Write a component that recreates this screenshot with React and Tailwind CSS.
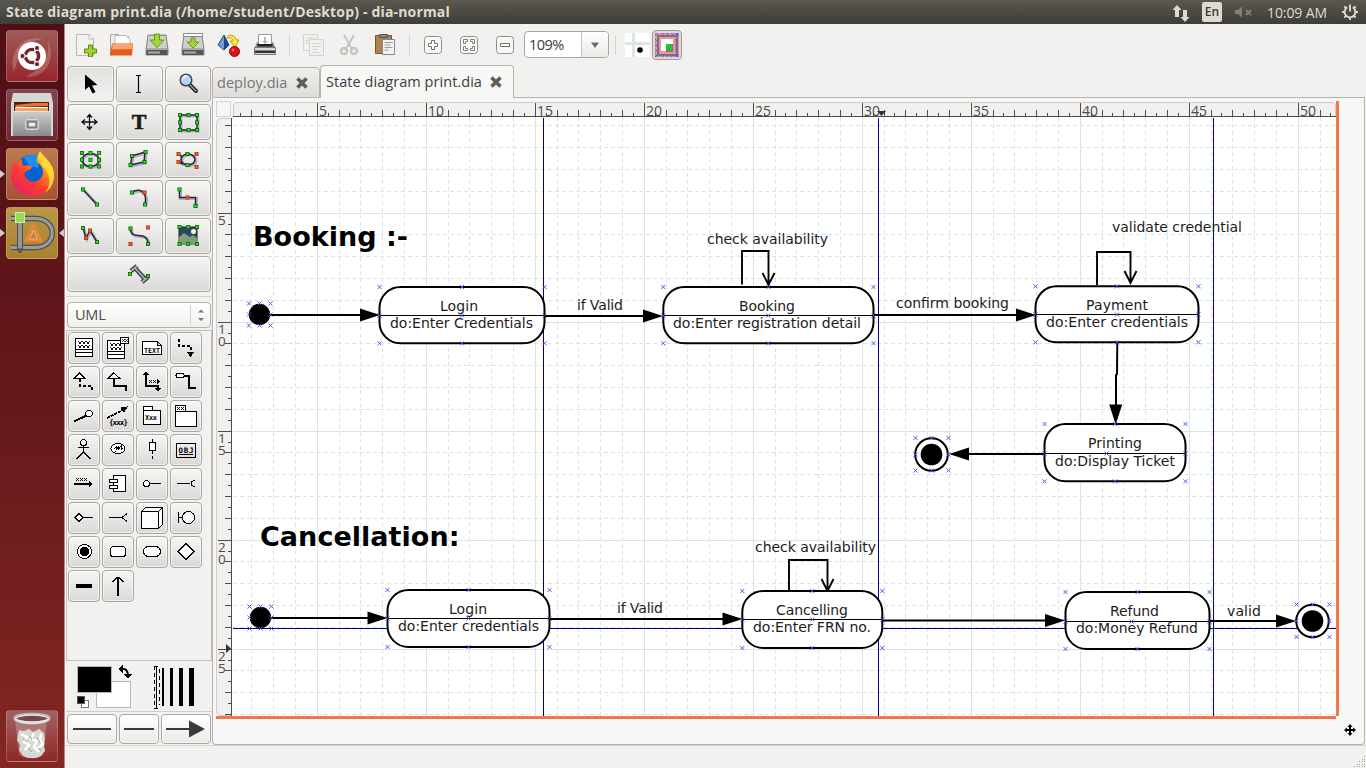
import React from "react";

const range = (n, from = 0) => Array.from({ length: n }, (_, i) => i + from);

/* ---------- top bar ---------- */

function TopBar() {
  return (
    <header className="flex h-6 shrink-0 items-center bg-linear-to-b from-[#5b584f] to-[#3e3d38] font-['Open_Sans',sans-serif] text-[#dfdbd2]">
      <h1 className="pl-[6px] text-[14px] leading-6 font-bold tracking-[0.17px] whitespace-nowrap">
        State diagram print.dia (/home/student/Desktop) - dia-normal
      </h1>
      <div className="ml-auto flex h-6 items-center pr-[7px]">
        <svg className="h-5 w-5" viewBox="0 0 20 20" fill="#dfdbd2">
          <path d="M6 3l4.500 5H8v7H4V8H1.500zM14 20l-4.500-5H12V8h4v7h2.500z" />
        </svg>
        <span className="ml-[11px] flex h-5 w-5 items-center justify-center rounded-xs bg-[#dfdbd2] text-[12px] font-semibold text-[#3c3b37]">En</span>
        <svg className="ml-[12px] h-5 w-5" viewBox="0 0 20 20">
          <path d="M1 8h3l4-3.500v11L4 12H1z" fill="#85827a" />
          <path d="M12 8l5 5m0-5l-5 5" stroke="#85827a" strokeWidth="1.800" />
        </svg>
        <span className="ml-[13px] w-[63px] text-[14px] tracking-[-0.1px] whitespace-nowrap">10:09 AM</span>
        <svg className="ml-[11px] h-[18px] w-[18px]" viewBox="0 0 18 18" fill="none" stroke="#dfdbd2" strokeWidth="1.900">
          <path d="M6.300 4.300a5.400 5.400 0 1 0 5.400 0M9 1.500v7M9 14v3M1 9h3M14 9h3M3.300 14.700l2-2M14.700 14.700l-2-2M3.300 3.300l1.700 1.700M14.700 3.300L13 5" />
        </svg>
      </div>
    </header>
  );
}

/* ---------- launcher ---------- */

function Tile({ className, children, left, right }) {
  return (
    <div className="flex h-[52px] w-[65px] items-center">
      <svg className="h-3 w-[6px] shrink-0" viewBox="0 0 6 12">{left && <path d="M0 2l5 4-5 4z" fill="#d9c8c8" />}</svg>
      <div className={"h-[52px] w-[52px] shrink-0 overflow-hidden rounded-[4px] border border-white/20 " + className}>
        <svg className="-m-px h-[52px] w-[52px]" viewBox="0 0 52 52">{children}</svg>
      </div>
      <svg className="h-3 w-[6px] shrink-0" viewBox="0 0 6 12">{right && <path d="M6 2L1 6l5 4z" fill="#d9c8c8" />}</svg>
    </div>
  );
}

function Launcher() {
  return (
    <nav className="flex w-[65px] shrink-0 flex-col gap-[7px] border-r border-[#b98484] bg-linear-to-b from-[#4f1015] via-[#65181b] to-[#832722] pt-[6px] pb-[6px]">
      <Tile className="bg-linear-to-b from-[#a05a58] to-[#96242a]">
        <path d="M8 42C2 22 17 4 37 9C17 11 13 25 8 42M20 47C41 48 50 28 42 10C45 32 32 39 20 47" fill="#fff" opacity="0.200" />
        <circle cx="26" cy="26" r="14" fill="#fff" />
        <circle cx="26" cy="26" r="6.600" fill="none" stroke="#74252b" strokeWidth="3.400" strokeDasharray="11.800 2" strokeDashoffset="-7.800" />
        <circle cx="16.500" cy="26" r="2.600" fill="#74252b" stroke="#fff" />
        <circle cx="31" cy="18" r="2.600" fill="#74252b" stroke="#fff" />
        <circle cx="31" cy="34.200" r="2.600" fill="#74252b" stroke="#fff" />
      </Tile>
      <Tile className="bg-linear-to-b from-[#83454e] to-[#6d2833]">
        <defs>
          <linearGradient id="cab" x1="0" y1="0" x2="0" y2="1"><stop offset="0" stopColor="#cfcfcf" /><stop offset="1" stopColor="#8a8a8a" /></linearGradient>
        </defs>
        <path d="M7 4h38l2 10v33H5V14z" fill="#d6d6d6" />
        <path d="M8 13h35v10H8z" fill="#4a1f16" />
        <path d="M9 16l19-2h14v3l-32 1z" fill="#e9742f" />
        <path d="M9 18h33v5H9z" fill="#f0a566" />
        <path d="M10 18.500h32" stroke="#fff" />
        <path d="M7 22h38v25H7z" fill="url(#cab)" />
        <path d="M7 22.500h38" stroke="#e6e6e6" />
        <rect x="19.500" y="30.500" width="13" height="10" rx="2" fill="#aaa" stroke="#ddd" />
        <rect x="22" y="33" width="8" height="5" fill="#eee" stroke="#555" />
      </Tile>
      <Tile left className="bg-linear-to-b from-[#bc7a51] to-[#a95236]">
        <defs>
          <linearGradient id="fox" x1="0.100" y1="1" x2="0.900" y2="0"><stop offset="0" stopColor="#e01f6a" /><stop offset="0.400" stopColor="#ff3b2d" /><stop offset="0.700" stopColor="#ff9520" /><stop offset="1" stopColor="#ffe62a" /></linearGradient>
        </defs>
        <circle cx="26" cy="25" r="18" fill="#0a62d0" />
        <path d="M18 10c6-5 13-4 17 0l-3 10-8-2z" fill="#1d8ff0" />
        <path d="M34 3c3 6 14 12 14 24c0 12-9 21-21.500 21C14 48 5 38 5 27c0-7 2-12 5-15v4c1-2 3-4 6-5c-1 3 0 5 2 7c3-1 5-1 7 0c2 2 0 3-4 5c-3 1-3 4-1 7c5 7 17 4 17-6c0-4-2-7-5-9C29 14 31 8 34 3z" fill="url(#fox)" />
        <path d="M34 3c3 6 14 12 14 24c0 9-4 14-9 18c7-9 5-17 0-24c-7-7-8-12-5-18z" fill="#ffe033" opacity="0.850" />
      </Tile>
      <Tile left right className="bg-linear-to-b from-[#bb9747] to-[#a8812f]">
        <g fill="none" strokeLinejoin="round">
          <path d="M5 11.500h24c23 0 23 29 0 29H5" stroke="#4c5152" strokeWidth="5.500" />
          <path d="M5 11.500h24c23 0 23 29 0 29H5" stroke="#999e9d" strokeWidth="3" />
          <path d="M14 12v30" stroke="#4c5152" strokeWidth="6" />
          <path d="M14 12v30" stroke="#92989a" strokeWidth="4" />
          <path d="M11 42l3 4 3-4z" fill="#666" stroke="#444" />
          <path d="M27.500 18l7.500 15.500H20z" stroke="#f38336" strokeWidth="2.500" />
          <path d="M27.500 23l4 9h-8z" stroke="#f9b076" strokeWidth="1" />
        </g>
        <rect x="9.500" y="5.500" width="9" height="10" fill="#97de58" stroke="#cdf2a6" />
      </Tile>
      <div className="mt-auto">
        <Tile className="bg-linear-to-b from-[#a26260] to-[#8d2529]">
          <path d="M9 10h32l-4 34c-3 5-21 5-24 0z" fill="#ddd" opacity="0.280" />
          <path d="M13 20l5 1 5-2 4 3 6-3 5 4 1 6-1 6 1 6-4 5c-5 3-12 3-18 0l-4-6 1-5-3-5 1-6z" fill="#d7d8d3" />
          <path d="M15 24l6 3-3 5 5 3-4 5M28 23l-3 6 6 2-3 6 5 5M35 24l-1 6 3 4-5 4" stroke="#fff" strokeWidth="2.500" fill="none" />
          <path d="M17 29l4 2M24 26l2 4M31 28l3 4M22 38l4 4M33 38l2 3" stroke="#9c9f99" fill="none" />
          <ellipse cx="26" cy="8.500" rx="17" ry="4.200" fill="#75484a" stroke="#e4e4e2" strokeWidth="3" />
          <ellipse cx="26" cy="9" rx="18" ry="5.500" fill="none" stroke="#999" strokeWidth="0.800" />
        </Tile>
      </div>
    </nav>
  );
}

/* ---------- toolbar ---------- */

const toolbarIcons = {
  New: (
    <g>
      <path d="M3.500 1.500h13l4 4v17h-17z" fill="#f2f2f0" stroke="#b9b9b4" />
      <path d="M16 1.500v4.500h4.500" fill="#fff" stroke="#b9b9b4" />
      <path d="M16.500 13.500h4v4h4v4h-4v4h-4v-4h-4v-4h4z" fill="#a2d335" stroke="#5d8d0c" transform="translate(-1 -1.500)" />
    </g>
  ),
  Open: (
    <g>
      <path d="M1.500 20.500V1.500h8l1 2h9v17z" fill="#ececea" stroke="#a9a9a3" />
      <path d="M6 2.500h11l4 4v8H6z" fill="#fff" stroke="#b9b9b4" />
      <path d="M1 21.500L3 10.500h21l-1 12H1z" fill="#ea5a1d" />
      <path d="M3.500 11h20l-.4 5-19.800.500z" fill="#f9a574" />
    </g>
  ),
  Save: <Drive />,
  "Save as": <Drive bar />,
  Export: (
    <g>
      <path d="M7 2L1 12l6 5 5-5z" fill="#729fcf" stroke="#204a87" />
      <path d="M7 2v15l5-5z" fill="#204a87" />
      <path d="M10 5c1-4 8-4 9 2h3l-4 7-5-6h3c0-3-3-3-6-3z" fill="#fce94f" stroke="#c4a000" />
      <circle cx="17.500" cy="18.500" r="5" fill="#dc1010" stroke="#990000" />
      <circle cx="16" cy="17" r="1.500" fill="#f36d6d" />
    </g>
  ),
  Print: (
    <g>
      <path d="M5.500 12V1.500h13V12" fill="#fff" stroke="#999" />
      <path d="M11 4h2v4h2l-3 3-3-3h2z" fill="#b7b7b7" />
      <path d="M2 14l2-5h1.500v3h13V9H20l2 5v8H2z" fill="#888" />
      <path d="M4.500 11h15v2.500h-15z" fill="#222" />
      <path d="M1.500 14.500h21v7h-21z" fill="#d8d8d6" stroke="#777" />
      <path d="M2 17.500h20v2.500H2z" fill="#333" />
    </g>
  ),
};

function Drive({ bar }) {
  return (
    <g>
      <path d="M3 2h18l2 14v6H1v-6z" fill="#a9aaa8" stroke="#777" strokeWidth="0.800" />
      <path d="M3.500 3h17l1.500 12H2z" fill="#cfd0ce" />
      <path d="M1.500 17h21v5h-21z" fill="#555" />
      <path d="M3 18.500h12v2H3z" fill="#aaa" />
      {bar && <path d="M2.500.500h19v3h-19z" fill="#fff" stroke="#888" />}
      <path d={bar ? "M10 5h4v4h4l-6 6-6-6h4z" : "M9.500 1h5v6h4.500L12 14.500 5 7h4.500z"} fill="#9fd63c" stroke="#5c9410" strokeWidth="0.900" />
    </g>
  );
}

const editIcons = {
  Copy: (
    <g fill="#f1f1ef" stroke="#d3d3d0">
      <path d="M2.500 1.500h14v16h-14z" />
      <path d="M4.500 5h9M4.500 7.500h4M4.500 10h3" />
      <path d="M8.500 6.500h14v16h-14z" />
      <path d="M11 10.500h9M11 13.500h9M11 16.500h6M11 19.500h8" />
    </g>
  ),
  Cut: (
    <g fill="none" stroke="#c5c5c2">
      <path d="M7 2l8 14M17 2L9 16" strokeWidth="2" />
      <circle cx="7" cy="18" r="3" strokeWidth="2.500" />
      <circle cx="17" cy="18" r="3" strokeWidth="2.500" />
    </g>
  ),
  Paste: (
    <g>
      <path d="M2.500 2.500h16v18h-16z" fill="#b08350" stroke="#7c5628" />
      <path d="M6.500 1.500h8v3h-8z" fill="#888" stroke="#555" />
      <path d="M9.500 6.500h12v15h-12z" fill="#f2f2f0" stroke="#888" />
      <path d="M11.500 9.500h8M11.500 12h6M11.500 14.500h8M11.500 17h4" stroke="#999" />
    </g>
  ),
};

const zoomFrame = <rect x="3.500" y="3.500" width="17" height="17" rx="3" fill="#f8f8f7" stroke="#8d918a" />;
const zoomIcons = {
  "Zoom in": <g>{zoomFrame}<path d="M10.500 7.500h3v3h3v3h-3v3h-3v-3h-3v-3h3z" fill="#fff" stroke="#6f736c" /></g>,
  "Zoom fit": <g>{zoomFrame}<path d="M6.500 10.500v-4h4v2h-2v2zM13.500 6.500h4v4h-2v-2h-2zM6.500 13.500v4h4v-2h-2v-2zM17.500 13.500v4h-4v-2h2v-2z" fill="#fff" stroke="#6f736c" strokeWidth="0.900" /></g>,
  "Zoom out": <g>{zoomFrame}<path d="M7.500 10.500h9v3h-9z" fill="#fff" stroke="#6f736c" /></g>,
};

function IconRow({ icons }) {
  return Object.entries(icons).map(([name, icon]) => (
    <button key={name} aria-label={name} className="flex h-9 w-9 items-center justify-center">
      <svg className="h-6 w-6" viewBox="0 0 24 24">{icon}</svg>
    </button>
  ));
}

const Sep = () => <div className="flex w-3 justify-center"><div className="h-5 w-px bg-[#d5d3cf]" /></div>;

function Toolbar() {
  return (
    <div className="flex h-[41px] shrink-0 items-center pl-[2px]">
      <IconRow icons={toolbarIcons} />
      <Sep />
      <IconRow icons={editIcons} />
      <Sep />
      <IconRow icons={zoomIcons} />
      <div className="ml-px flex h-[27px] w-[85px] overflow-hidden rounded-[4px] border border-[#aaa69f] bg-white">
        <span className="flex-1 pl-[4px] font-['Open_Sans',sans-serif] text-[14.5px] leading-[25px] tracking-[-0.5px] text-[#3c3c3c]">109%</span>
        <span className="flex w-[27px] items-center justify-center border-l border-[#c3c0bb] bg-linear-to-b from-white to-[#eceae8]">
          <svg className="h-2 w-2" viewBox="0 0 8 8"><path d="M0 1.500h8L4 7z" fill="#6c6c6c" /></svg>
        </span>
      </div>
      <Sep />
      <svg className="ml-[4px] h-6 w-6" viewBox="0 0 24 24">
        <path d="M0 0h24v24H0z" fill="#fff" />
        <path d="M7 0h3v24H7zM0 9h24v3H0z" fill="#dde6e6" />
        <circle cx="15" cy="17" r="2.800" />
      </svg>
      <button className="ml-[3px] flex h-[30px] w-[30px] items-center justify-center rounded-[4px] border border-[#a09c95] bg-[#dcdad7]">
        <svg className="h-6 w-6" viewBox="0 0 24 24" shapeRendering="crispEdges">
          <path d="M0 0h24v24H0z" fill="#ef9494" />
          <path d="M2.500 2.500h19v19h-19z" fill="none" stroke="#777" strokeWidth="2" />
          <path d="M6 6h12v12H6z" fill="#fff" />
          <path d="M11 11h7v8h-7z" fill="#777" />
          <path d="M11 11h5v5h-5zM11 11l5 5M16 11l-5 5" fill="none" stroke="#12dc12" />
          <g stroke="#5a55ff" strokeWidth="0.800">
            {[1, 7, 12, 17, 22].map((p) => (
              <path key={p} d={`M${p - 1} 0l3 3m0-3l-3 3M${p - 1} 21l3 3m0-3l-3 3M0 ${p - 1}l3 3m0-3l-3 3M20 ${p - 1}l3 3m0-3l-3 3`} />
            ))}
          </g>
        </svg>
      </button>
    </div>
  );
}

/* ---------- toolbox ---------- */

function Dots({ g = [], o = [] }) {
  return (
    <g strokeWidth="0.800" stroke="#155c0c">
      {g.map(([x, y]) => <rect key={x + "," + y} x={x - 1.600} y={y - 1.600} width="3.200" height="3.200" fill="#10ee10" />)}
      {o.map(([x, y]) => <rect key={x + "," + y} x={x - 1.600} y={y - 1.600} width="3.200" height="3.200" fill="#fb5c14" stroke="#a33c10" />)}
    </g>
  );
}

function Shape({ d, g, o }) {
  return (
    <g>
      <path d={d} fill="none" stroke="#5c609f" strokeWidth="3" opacity="0.400" transform="translate(1 1)" />
      <path d={d} fill="none" stroke="#26292c" strokeWidth="1.500" />
      <Dots g={g} o={o} />
    </g>
  );
}

const box8 = (a, b, c, d) => [[a, b], [(a + c) / 2, b], [c, b], [a, (b + d) / 2], [c, (b + d) / 2], [a, d], [(a + c) / 2, d], [c, d]];

const tools = [
  <path d="M18 8.500v15.500l4-3.500 3.500 7 3-1.500-3.500-6.500 5.500-.500z" fill="#000" />,
  <path d="M20 9.500h2l.5.500.5-.500h2M20 26.500h2l.5-.500.500.500h2M22.500 10v16" fill="none" stroke="#000" strokeWidth="1.200" />,
  <g>
    <path d="M25 19l6 6" stroke="#222" strokeWidth="4" strokeLinecap="round" />
    <path d="M25 19l6 6" stroke="#999" strokeWidth="1.500" strokeLinecap="round" />
    <circle cx="21" cy="14" r="5.800" fill="#b9d5ee" stroke="#3a4a5a" strokeWidth="1.500" />
    <path d="M18 13c0-2 2-3 4-3" stroke="#fff" strokeWidth="1.500" fill="none" />
  </g>,
  <path d="M22.500 11v14M15.500 18h14M20 13.500l2.500-3 2.500 3M20 22.500l2.500 3 2.500-3M18 15.500L15 18l3 2.500M27 15.500l3 2.500-3 2.500" fill="none" stroke="#111" strokeWidth="1.300" />,
  <text x="23" y="25" textAnchor="middle" fontFamily="Liberation Serif" fontWeight="700" fontSize="22" fill="#1c1a12" stroke="#1c1a12" strokeWidth="0.600">T</text>,
  <Shape d="M15 11h17v15H15z" g={box8(15, 11, 32, 26)} />,
  <Shape d="M15 18a8.500 6.500 0 1 0 17 0a8.500 6.500 0 1 0-17 0" g={[...box8(15, 11, 32, 24.500), [23.500, 17.800]]} />,
  <Shape d="M16 14l13-4-1 10-13.500 3z" g={[[16, 14], [29.500, 10], [28.500, 20], [14.500, 23]]} />,
  <Shape d="M16 17.500a7 5.500 0 1 0 14 0a7 5.500 0 1 0-14 0M14 12l3 3M14 20l4 2" g={[[22.500, 12], [22.500, 23]]} o={[[13.500, 12], [31.500, 12], [13.500, 20], [31.500, 25]]} />,
  <Shape d="M16 9.500l14 15" g={[[16, 9.500], [30, 24.500]]} />,
  <Shape d="M16 12.500C22 8 32 10 29 24.500" g={[[16, 12.500], [29, 24.500]]} o={[[28.500, 12.500]]} />,
  <Shape d="M14.500 9.500v8h16V26" g={[[14.500, 9.500], [30.500, 26]]} o={[[22.500, 17.500]]} />,
  <Shape d="M16 10l3 10 4-7.500L30 24" g={[[16, 10], [30, 24]]} o={[[19, 20], [23, 12.500]]} />,
  <Shape d="M14.500 10.500c0 13 17 1 17.500 15" g={[[14.500, 10.500], [32, 26]]} o={[[32, 9.500], [14.500, 26]]} />,
  <g>
    <path d="M14 9h18v17H14z" fill="#294768" stroke="#222" />
    <path d="M14 19l5-4 6 4 3-2 4 3v6H14z" fill="#7d9f73" />
    <circle cx="28.500" cy="13.500" r="2.500" fill="#fffbe0" />
    <Dots g={box8(14.500, 9, 32, 26).filter((p) => p[1] !== 17.500)} />
  </g>,
];

const btn = "rounded-[4px] border border-[#aaa7a2] shadow-[inset_0_0_0_1px_#ffffff90] ";

function TinyX({ x, y, n }) {
  return <path d={range(n).map((i) => `M${x + i * 4} ${y}l3 3m0-3l-3 3`).join("")} strokeWidth="0.900" />;
}

const small = { fontFamily: "DejaVu Sans Mono", fontWeight: 700, fill: "#000", stroke: "none" };

const sheet = [
  <><path fill="#fff" d="M7.500 6.500h17v18h-17zM7.500 17.500h17M7.500 20.500h17" /><TinyX x={10} y={8.500} n={3} /><TinyX x={10} y={12.500} n={3} /></>,
  <><path fill="#fff" d="M5.500 8.500h17v18h-17zM5.500 19.500h17M5.500 22.500h17" /><TinyX x={8} y={10.500} n={3} /><TinyX x={8} y={14.500} n={3} /><path fill="#fff" d="M18.500 5.500h8v6h-8z" /><path d="M20 7l3 3m0-3l-3 3M23 7l3 3m0-3l-3 3" strokeWidth="0.700" /></>,
  <><path fill="#fff" d="M6.500 9.500h15l4 4v9h-19zM21.500 9.500v4h4" /><text x="8" y="21" fontSize="7" textLength="16" lengthAdjust="spacingAndGlyphs" {...small}>TEXT</text></>,
  <><path d="M8.500 7v6.500H20.500V21" strokeWidth="2" strokeDasharray="3 2" /><path d="M17 20h7l-3.500 5z" fill="#000" stroke="none" /></>,
  <><path fill="#fff" d="M11.500 7l-5 5h10z" /><path d="M11.500 13v6.500h12V26" strokeWidth="2" strokeDasharray="3 2" /></>,
  <><path fill="#fff" d="M11.500 7l-5 5h11z" /><path d="M12 12v8h12v5" strokeWidth="2" /></>,
  <><path d="M10 8v12h12v4" strokeWidth="2" /><path d="M10 5l-3 4h6zM22 26l-3-4h6zM21 13v5l3-2.500z" fill="#000" stroke="none" /><TinyX x={13} y={14} n={2} /></>,
  <><ellipse cx="10" cy="9.500" rx="4" ry="2.500" fill="#fff" /><path d="M14 10h5v12H26" strokeWidth="2" /></>,
  <><path d="M6 21.500l12.500-6" strokeWidth="2" /><circle cx="21" cy="13.500" r="3.200" fill="#fff" /></>,
  <><path d="M5 18l17-8.500" strokeWidth="1.500" strokeDasharray="3 1" /><path d="M25 7l-6 1 3 4z" fill="#000" /><text x="7" y="25" fontSize="7.500" textLength="19" {...small}>{"{xxx}"}</text></>,
  <><path fill="#fff" d="M7.500 10.500h17v14h-17zM7.500 6.500h9v4h-9z" /><text x="9" y="20" fontSize="7" textLength="12" {...small}>Xxx</text></>,
  <><path fill="#fff" d="M5.500 11.500h21v15h-21zM5.500 5.500h10v6h-10z" /><TinyX x={7} y={7} n={2} /></>,
  <><circle cx="15.500" cy="8.500" r="3" /><path d="M15.500 12v7M10 13.500h11M15.500 18l-7 7M15.500 18l7 7" strokeWidth="1.800" /></>,
  <><ellipse cx="16" cy="14.500" rx="7" ry="5" fill="#fff" /><path d="M12 15l2-2v3l3-4-1 4 3-4v4l2-2" /></>,
  <><path fill="#fff" d="M13.500 8.500h6v8h-6zM16.500 5v3" /><path d="M16.500 17v9" strokeDasharray="3 2" /></>,
  <><path d="M6.500 9.500h19v14h-19z" /><text x="8.500" y="18.500" fontSize="7.500" textLength="15" {...small}>OBJ</text><path d="M9 20.500h14" /></>,
  <><TinyX x={8} y={10} n={3} /><path d="M6 16h17" strokeWidth="2" /><path d="M21 12.500v7l4-3.500z" fill="#000" stroke="none" /></>,
  <><path fill="#fff" d="M11.500 7.500h12v16h-12z" /><path fill="#fff" d="M7.500 11.500h8v3h-8zM7.500 17.500h8v3h-8z" /></>,
  <><circle cx="10.500" cy="15.500" r="3" fill="#fff" /><path d="M13.500 15.500H25" /></>,
  <path d="M6.500 15.500H20M25 12.500c-5 0-5 6 0 6" />,
  <><path d="M7 15.500l4-4 4 4-4 4z" fill="#fff" /><path d="M15 15.500h10" /></>,
  <path d="M6.500 15.500H20l5-4M20 15.500l5 4" />,
  <path fill="#fff" d="M5.500 9.500l4-4h17v17l-4 4h-17zM5.500 9.500h17v17M22.500 9.500l4-4" />,
  <><path d="M8.500 10v11M8.500 15.500H13" /><circle cx="18.500" cy="15.500" r="6" fill="#fff" /></>,
  <><circle cx="16.500" cy="15.500" r="7" fill="#fff" /><circle cx="16.500" cy="15.500" r="4.800" fill="#000" stroke="none" /></>,
  <rect x="8.500" y="10.500" width="15" height="10" rx="3" fill="#fff" />,
  <rect x="7.500" y="10.500" width="17" height="10" rx="5" fill="#fff" />,
  <path d="M16 7.500l8 8-8 8-8-8z" fill="#fff" />,
  <path d="M8 14h16v4H8z" fill="#000" stroke="none" />,
  <><path d="M16 7v19" strokeWidth="2" /><path d="M10.500 12L16 7l5.500 5" strokeWidth="1.300" /></>,
];

function Toolbox() {
  return (
    <aside className="flex w-[147px] shrink-0 flex-col border-l border-white/60 pt-px">
      <div className="grid grid-cols-[47px_47px_46px] gap-[2px] pl-px">
        {tools.map((icon, i) => (
          <button key={i} className={btn + (i === 0 ? "h-9 border-[#989490] bg-linear-to-b from-[#e3e1de] to-[#f3f2f0]" : "h-9 bg-linear-to-b from-[#f6f6f5] to-[#dbd9d7]")}>
            <svg className="-m-px h-9 w-[47px]" viewBox="0 0 47 36">{icon}</svg>
          </button>
        ))}
        <button className={btn + "col-span-3 flex h-9 items-center justify-center bg-linear-to-b from-[#f6f6f5] to-[#dbd9d7]"}>
          <svg className="h-6 w-6" viewBox="0 0 24 24">
            <path d="M4 9l6-5M8 6l10 11M15 20l6-5" stroke="#3f464a" strokeWidth="4.500" />
            <path d="M4 9l6-5M8 6l10 11M15 20l6-5" stroke="#a5aeb2" strokeWidth="1.800" />
            <Dots g={[[3, 12], [21, 14]]} />
          </svg>
        </button>
      </div>
      <div className="mt-[4px] h-px bg-[#d6d4d0]" />
      <div className="mt-[5px] ml-px flex h-[26px] w-[144px] items-center rounded-[4px] border border-[#b4b1ac] bg-linear-to-b from-white to-[#f1f0ef] pl-[7px] font-['Open_Sans',sans-serif] text-[14.5px] tracking-[-0.2px] text-[#4c4c4c]">
        UML
        <span className="ml-auto flex h-5 w-[20px] items-center justify-center border-l border-[#d4d1cd]">
          <svg className="h-3 w-2" viewBox="0 0 8 12"><path d="M1 3.500l3-3 3 3zM1 9l3 3 3-3z" fill="#777" /></svg>
        </span>
      </div>
      <div className="mt-[2px] h-[331px] w-[146px] border border-[#c3c1bc] pt-px pl-px">
        <div className="grid grid-cols-[repeat(4,32px)] gap-[2px]">
          {sheet.map((icon, i) => (
            <button key={i} className={btn + "h-8 w-8 bg-linear-to-b from-[#f6f6f5] to-[#dbd9d7]"}>
              <svg className="-m-px h-8 w-8" viewBox="0 0 32 32" fill="none" stroke="#000" shapeRendering="crispEdges">{icon}</svg>
            </button>
          ))}
        </div>
      </div>
      <div className="flex h-[51px] w-[146px] justify-between border-b border-[#d0ceca] pr-[15px] pl-[11px]">
        <svg className="h-[50px] w-[58px]" viewBox="0 0 58 50" shapeRendering="crispEdges">
          <path d="M19.500 20.500h34v26h-34z" fill="#fff" stroke="#b9b7b2" />
          <path d="M.500 5.500h34v26h-34z" fill="#000" stroke="#b9b7b2" />
          <path d="M4.500 39.500h7v7h-7z" fill="#fff" stroke="#777" />
          <path d="M.500 35.500h7v7h-7z" fill="#000" stroke="#555" />
          <path d="M44 8c5-1 7 2 7 7" fill="none" stroke="#000" strokeWidth="2" shapeRendering="auto" />
          <path d="M46 4v8l-5-4zM47 13h8l-4 5z" />
        </svg>
        <svg className="h-[50px] w-[44px]" viewBox="0 0 44 50" shapeRendering="crispEdges">
          <path d="M1 5.500h4M1 47.500h4M1.500 5v42M6.500 8v36" fill="none" stroke="#000" strokeDasharray="4 3" />
          <path d="M3.500 6v41" stroke="#000" />
          <path d="M9 7h2v38H9zM17 7h3v38h-3zM26 7h4v38h-4zM36 7h5v38h-5z" />
        </svg>
      </div>
      <div className="mt-[2px] ml-px flex gap-[2px]">
        <button className={btn + "flex h-[30px] w-[50px] items-center justify-center bg-linear-to-b from-white to-[#eceae8]"}><span className="h-[2px] w-[38px] bg-[#3a3a3a]" /></button>
        <button className={btn + "flex h-[30px] w-[40px] items-center justify-center bg-linear-to-b from-white to-[#eceae8]"}><span className="h-[2px] w-[30px] bg-[#3a3a3a]" /></button>
        <button className={btn + "flex h-[30px] w-[50px] items-center justify-center bg-linear-to-b from-white to-[#eceae8]"}>
          <svg className="h-[18px] w-10" viewBox="0 0 40 18"><path d="M0 8h23V.500l16 8.500-16 8.500V10H0z" fill="#3a3a3a" /></svg>
        </button>
      </div>
    </aside>
  );
}

/* ---------- rulers ---------- */

const gx = (k) => Math.floor(317.250 + 21.800 * k);
const gy = (k) => Math.floor(213.100 + 21.800 * k);

function TopRuler() {
  return (
    <svg className="h-4 w-[1103px] overflow-visible" viewBox="233 101 1103 16">
      <path d="M233.500 117v-10q0-4.500 5-4.500H1331q4.500 0 4.500 4.500v10" fill="#f1f0ee" stroke="#cfcdc8" />
      <g stroke="#4c4c4c" shapeRendering="crispEdges">
        <path d="M233 116.500H1336" />
        {range(50, -3).map((k) => {
          const x = gx(k) + 0.500;
          return <path key={k} d={`M${x} ${k % 5 === 0 ? 103 : 110}V116`} />;
        })}
        {range(51, -4).map((k) => <path key={k} d={`M${gx(k + 0.500) + 0.500} 113V116`} />)}
      </g>
      <path d="M877 111h9l-4.500 5z" fill="#333" />
      <g fill="#4c4c4c" fontFamily="Open Sans, sans-serif" fontSize="14">
        {range(10).map((i) => (
          <text key={i} x={gx(i * 5) + 2} y="116" textLength={i ? 16 : 8}>{5 + i * 5}</text>
        ))}
      </g>
    </svg>
  );
}

function LeftRuler() {
  return (
    <svg className="h-[598px] w-4 overflow-visible" viewBox="216 118 16 598">
      <path d="M232 118.500h-10q-5.500 0-5.500 5V711q0 4.500 5 4.500h11" fill="#f1f0ee" stroke="#cfcdc8" />
      <g stroke="#4c4c4c" shapeRendering="crispEdges">
        <path d="M231.500 118V716" />
        {range(28, -4).map((k) => {
          const y = gy(k) + 0.500;
          return <path key={k} d={`M${k % 5 === 0 ? 218 : 225} ${y}H231`} />;
        })}
        {range(27, -4).map((k) => <path key={k} d={`M228 ${gy(k + 0.500) + 0.500}H231`} />)}
      </g>
      <path d="M226 644v9l5-4.500z" fill="#333" />
      <g fill="#4c4c4c" fontFamily="Open Sans, sans-serif" fontSize="13.500">
        {range(5).map((i) =>
          String(5 + i * 5).split("").map((c, j) => (
            <text key={i + "-" + j} x="218" y={gy(i * 5) + 12 + j * 12}>{c}</text>
          ))
        )}
      </g>
    </svg>
  );
}

/* ---------- diagram ---------- */

function Marks({ xs, ys, c, skipCenter }) {
  const pts = [];
  xs.forEach((x, i) => ys.forEach((y, j) => {
    const center = i === 1 && j === 1;
    if (!(center && skipCenter)) pts.push([center && c ? c : x, y]);
  }));
  return (
    <path
      d={pts.map(([x, y]) => `M${x - 2} ${y - 2}l4 4m0-4l-4 4`).join("")}
      stroke="#5050f5"
      strokeWidth="0.950"
      fill="none"
    />
  );
}

function State({ x1, x2, y1, y2, mid, name, action, nx, ax, c, lift = [0, 0] }) {
  return (
    <g>
      <rect x={x1} y={y1} width={x2 - x1} height={y2 - y1} rx="21" fill="#fff" stroke="#000" strokeWidth="2" />
      <path d={`M${x1} ${mid + 0.500}H${x2}`} stroke="#000" />
      <Label x={nx[0]} y={mid - 4 - lift[0]} w={nx[1] - nx[0]}>{name}</Label>
      <Label x={ax[0]} y={mid + 13 - lift[1]} w={ax[1] - ax[0]}>{action}</Label>
      <Marks xs={[x1, (x1 + x2) / 2, x2]} ys={[y1, mid + 0.500, y2]} c={c} />
    </g>
  );
}

function Label({ x, y, w, children }) {
  return (
    <text x={x} y={y} textLength={w} fontFamily="DejaVu Sans, sans-serif" fontSize="14" fill="#1c1c1c">
      {children}
    </text>
  );
}

function Flow({ from, to, y }) {
  const s = to > from ? 1 : -1;
  return (
    <g>
      <path d={`M${from} ${y}H${to - s * 15}`} stroke="#000" strokeWidth="2" />
      <path d={`M${to} ${y}l${-s * 20} -6.500v13z`} />
    </g>
  );
}

function Loop({ x1, x2, top, base, tip }) {
  return (
    <path d={`M${x1} ${base}V${top}H${x2}V${tip}M${x2 - 6} ${tip - 12}L${x2} ${tip}L${x2 + 6} ${tip - 12}`} fill="none" stroke="#000" strokeWidth="1.900" />
  );
}

function Final({ cx, cy }) {
  return (
    <g>
      <circle cx={cx} cy={cy} r="16.300" fill="#fff" stroke="#000" strokeWidth="2" />
      <circle cx={cx} cy={cy} r="10.800" />
      <Marks xs={[cx - 16, cx, cx + 17]} ys={[cy - 16.500, cy, cy + 16]} skipCenter />
    </g>
  );
}

function Canvas() {
  return (
    <svg className="block h-[599px] w-[1104px] bg-white" viewBox="232 117 1104 599">
      <g stroke="#d8e5e5" shapeRendering="crispEdges">
        {range(50, -3).map((k) => <path key={"v" + k} d={`M${gx(k) + 0.500} 117V716`} strokeDasharray={k % 5 ? "4 3" : "none"} />)}
        {range(28, -4).map((k) => <path key={"h" + k} d={`M233 ${gy(k) + 0.500}H1336`} strokeDasharray={k % 5 ? "4 3" : "none"} />)}
      </g>
      <path d="M543.500 118V716M878.500 118V716M1213.500 118V716M233 628.500H1336" stroke="#00008c" shapeRendering="crispEdges" />

      <g fontFamily="DejaVu Sans, sans-serif" fontWeight="700" fontSize="27">
        <text x="253" y="246" textLength="155">Booking :-</text>
        <text x="260" y="546" textLength="199.500">Cancellation:</text>
      </g>

      <Flow from={270} to={380} y={315} />
      <circle cx="259.500" cy="314.500" r="10.700" />
      <Marks xs={[249, 259.500, 270.500]} ys={[303.500, 314.500, 325.500]} skipCenter />
      <State x1={379.500} x2={544.500} y1={287} y2={343.300} mid={315} name="Login" action="do:Enter Credentials" nx={[440, 478]} ax={[390, 533]} />
      <Flow from={545} to={663} y={316} />
      <Loop x1={742} x2={768.500} top={251} base={284.500} tip={285} />
      <State x1={663.300} x2={873.500} y1={287} y2={343.300} mid={315} name="Booking" action="do:Enter registration detail" nx={[739, 795]} ax={[673, 861]} />
      <Flow from={874} to={1036} y={315} />
      <Loop x1={1097} x2={1130.500} top={252} base={285} tip={283} />
      <path d="M1117.300 342L1117 374L1116 375V410" fill="none" stroke="#000" strokeWidth="2" />
      <path d="M1115.700 424.500l-6.500-20h13z" />
      <State x1={1035.500} x2={1198.500} y1={286.300} y2={342.300} mid={314} name="Payment" action="do:Enter credentials" nx={[1086, 1148]} ax={[1046, 1188]} />
      <Flow from={1044} to={949} y={454} />
      <State x1={1044.500} x2={1185.500} y1={424} y2={481.300} mid={453} lift={[1, 0]} name="Printing" action="do:Display Ticket" nx={[1088, 1142]} ax={[1055, 1175]} c={1106.500} />
      <Final cx={931.500} cy={454.500} />

      <Flow from={271} to={387.500} y={618} />
      <circle cx="260.500" cy="617.500" r="10.700" />
      <Marks xs={[249.500, 260.500, 271.500]} ys={[606.500, 617.500, 628.500]} skipCenter />
      <State x1={387.500} x2={549.500} y1={590} y2={647} mid={618} name="Login" action="do:Enter credentials" nx={[449, 487]} ax={[398, 539]} />
      <Flow from={550} to={742.500} y={619} />
      <Loop x1={789} x2={827.500} top={560} base={592} tip={591} />
      <State x1={742.300} x2={882.300} y1={591} y2={648} mid={619} name="Cancelling" action="do:Enter FRN no." nx={[776, 848]} ax={[753, 871]} />
      <Flow from={883} to={1065} y={620.500} />
      <State x1={1065.500} x2={1209.500} y1={592} y2={649} mid={621} lift={[1, 1]} name="Refund" action="do:Money Refund" nx={[1110, 1159]} ax={[1076, 1198]} c={1131.500} />
      <Flow from={1210} to={1296} y={621} />
      <Final cx={1312.500} cy={621} />

      <Label x={577} y={310} w={46}>if Valid</Label>
      <Label x={707} y={244} w={121}>check availability</Label>
      <Label x={896} y={308} w={113}>confirm booking</Label>
      <Label x={1112} y={232} w={130}>validate credential</Label>
      <Label x={755} y={552} w={121}>check availability</Label>
      <Label x={617} y={613} w={46}>if Valid</Label>
      <Label x={1227} y={616} w={34}>valid</Label>
    </svg>
  );
}

/* ---------- document area ---------- */

const Close = () => (
  <svg className="h-3 w-3" viewBox="0 0 12 12"><path d="M1.500 1.500l9 9m0-9l-9 9" stroke="#5d5d5b" strokeWidth="3.600" /></svg>
);

function Notebook() {
  return (
    <section className="flex h-[680px] w-[1153px] flex-col">
      <div className="flex h-[33px] items-end font-['Open_Sans',sans-serif] text-[14.5px]">
        <div className="flex h-[31px] w-[108px] items-center rounded-t-[4px] border border-[#b6b3ad] bg-linear-to-b from-[#efeeec] to-[#dfddda] pl-[4px] text-[#777]">
          <span className="w-[79px] tracking-[0.05px]">deploy.dia</span>
          <Close />
        </div>
        <div className="flex h-[33px] w-[194px] items-center rounded-t-[4px] border border-b-0 border-[#b6b3ad] bg-[#f7f7f6] pb-px pl-[5px] text-[#3c3c3c]">
          <span className="w-[164px] tracking-[0.05px] whitespace-nowrap">State diagram print.dia</span>
          <Close />
        </div>
        <div className="h-px flex-1 bg-[#b6b3ad]" />
      </div>
      <div className="flex flex-1 flex-col rounded-b-[4px] border border-t-0 border-[#b6b3ad] bg-[#f6f6f6] pt-[3px] pl-[3px]">
        <div className="flex">
          <div className="grid grid-cols-[16px_1104px]">
            <div className="h-4 w-[15px] border border-[#d5d3cf]" />
            <div className="flex h-4 pl-px"><TopRuler /></div>
            <div className="pt-px"><LeftRuler /></div>
            <Canvas />
          </div>
          <div className="w-[3px] bg-[#f07746]" />
        </div>
        <div className="flex">
          <div className="h-[3px] w-[1120px] bg-[#f07746]" />
          <svg className="mt-[8px] ml-[8px] h-3 w-3" viewBox="0 0 12 12">
            <path d="M6 0l2.500 3H7v2h2V3.500L12 6 9 8.500V7H7v2h1.500L6 12 3.500 9H5V7H3v1.500L0 6l3-2.500V5h2V3H3.500z" />
          </svg>
        </div>
      </div>
    </section>
  );
}

export default function App() {
  return (
    <div className="flex h-[768px] w-[1366px] flex-col overflow-hidden bg-[#f2f1f0]">
      <TopBar />
      <div className="flex min-h-0 flex-1">
        <Launcher />
        <main className="flex min-w-0 flex-1 flex-col">
          <Toolbar />
          <div className="flex h-[680px]">
            <Toolbox />
            <Notebook />
          </div>
          <footer className="flex flex-1 items-end justify-between border-t border-[#d6d4d0]">
            <span />
            <svg className="h-3 w-3" viewBox="0 0 12 12" fill="#aaa7a2" shapeRendering="crispEdges">
              {range(5).flatMap((r) => range(r + 1).map((c) => <rect key={r + "-" + c} x={10 - c * 2.500} y={r * 2.500} width="1" height="1" />))}
            </svg>
          </footer>
        </main>
      </div>
    </div>
  );
}
